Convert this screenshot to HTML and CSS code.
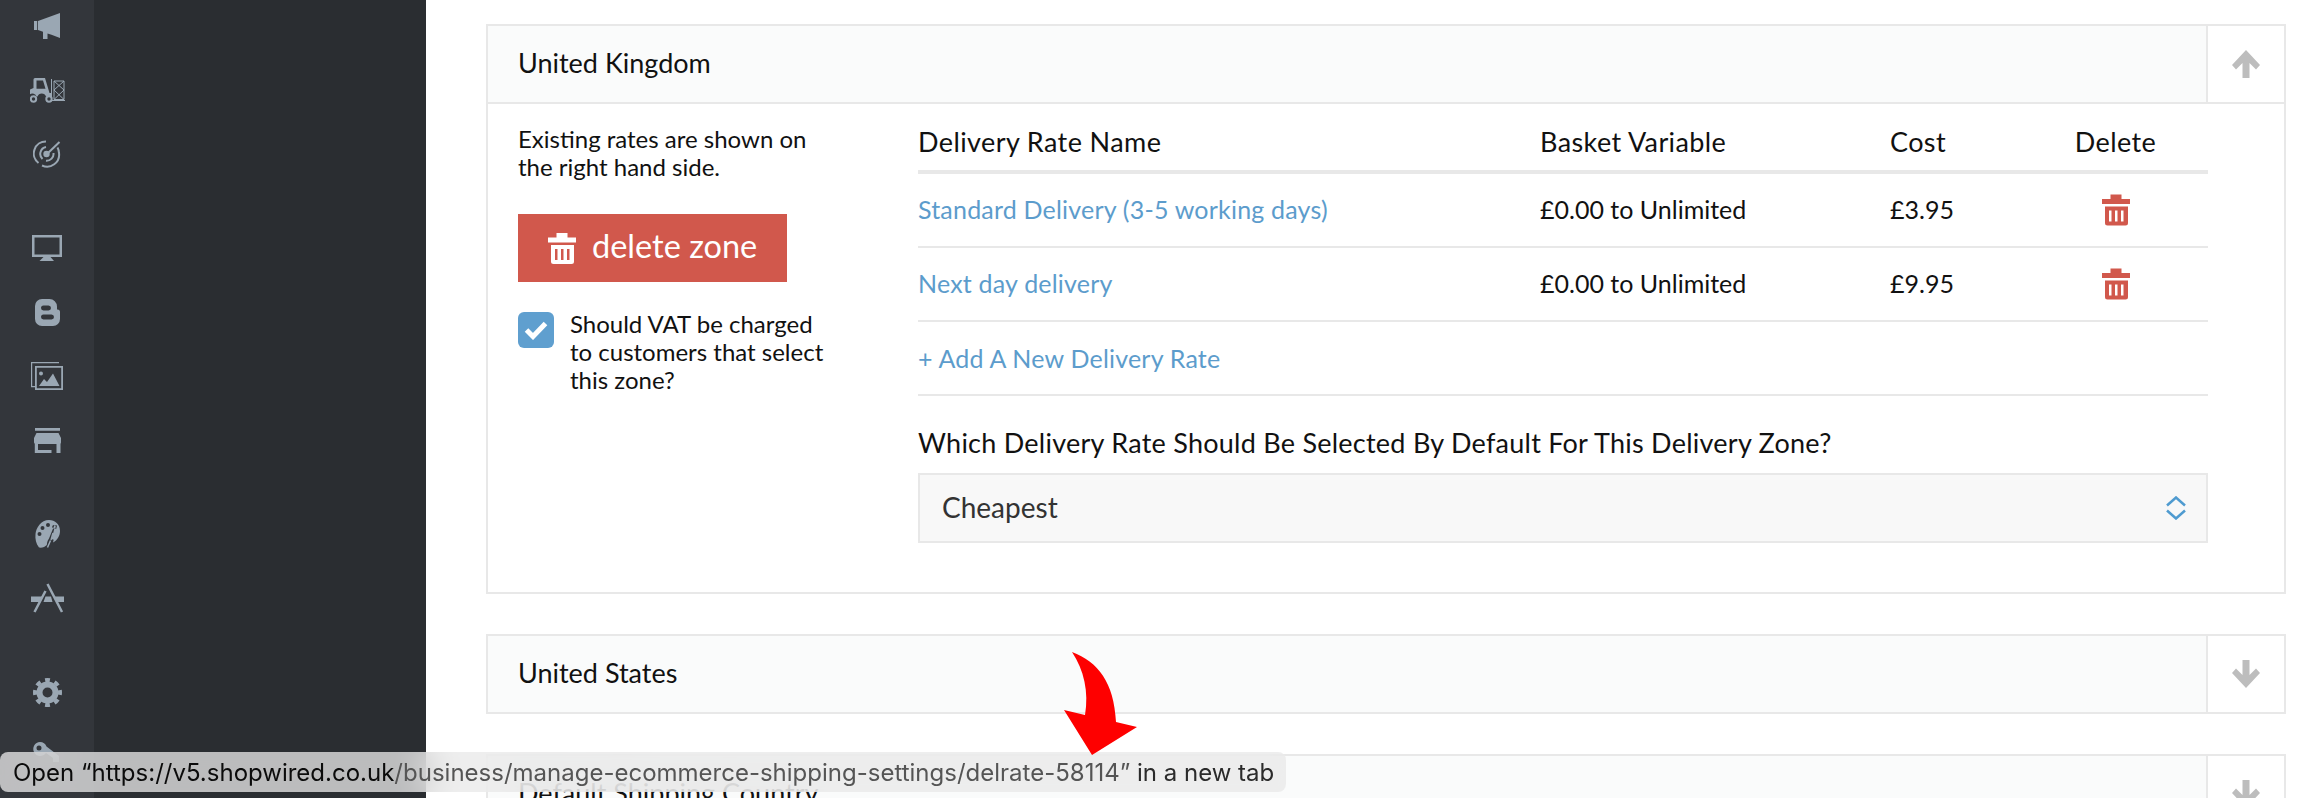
FILE: index.html
```html
<!DOCTYPE html>
<html lang="en">
<head>
<meta charset="utf-8">
<title>Delivery zones</title>
<link rel="stylesheet" href="styles.css">
</head>
<body>
<aside class="sidebar">
  <nav class="rail">
    <div class="rail-group">
      <div class="rail-item"><svg width="26" height="26" viewBox="0 0 26 26"><path class="ico" d="M0 8h3.200v9H0zM4 8L26 0v25L17.500 21.800 13.500 20.400V26H9V18.800L4 17z"/></svg></div>
      <div class="rail-item"><svg width="35" height="25" viewBox="0 0 35 25"><path class="ico" fill-rule="evenodd" d="M5 0h10l4.500 15H21v3.500h-5a4.500 4.500 0 0 0-8.500 0H6.500A4.500 4.500 0 0 0 0 16.200V11.500L3.500 10V1.500A1.500 1.500 0 0 1 5 0zM6.500 2.500V10.800H15.500L13 2.500z"/><circle class="ico-line" cx="3.500" cy="21" r="2.700"/><circle class="ico-line" cx="19" cy="21" r="2.700"/><path class="ico-thin" d="M21.500 1V22.500H35M24 3H34V21.500H24zM24 3L34 12M34 3L24 12M24 12L34 21.500M34 12L24 21.500"/></svg></div>
      <div class="rail-item"><svg width="28" height="28" viewBox="0 0 28 28"><path class="ico-line" d="M13 1.500A12 12 0 0 0 5.500 23M9 25.500A12 12 0 0 0 26 13a12 12 0 0 0-1.500-5.500M13 7A7 7 0 0 0 9.500 19M13 20.800A7 7 0 0 0 20.500 13"/><path class="ico-line" d="M14 14L26.500 2"/><circle class="ico" cx="13.500" cy="14" r="3.200"/></svg></div>
    </div>
    <div class="rail-group">
      <div class="rail-item"><svg width="30" height="26" viewBox="0 0 30 26"><path class="ico" fill-rule="evenodd" d="M0 0H30V22H18.500L22 26H7.500L11.500 22H0zM2.500 2.500V19.500H27.500V2.500z"/><rect class="ico" x="13.500" y="20" width="3" height="2"/></svg></div>
      <div class="rail-item"><svg width="25" height="27" viewBox="0 0 25 27"><path class="ico" fill-rule="evenodd" d="M7 0H14.500A7.500 7.500 0 0 1 22 7.500V10.500H22.500A2.500 2.500 0 0 1 25 13V20A7 7 0 0 1 18 27H7A7 7 0 0 1 0 20V7A7 7 0 0 1 7 0zM8.500 6.500A2.500 2.500 0 0 0 8.500 11.500H13.500A2.500 2.500 0 0 0 13.500 6.500zM8.500 15.500A2.500 2.500 0 0 0 8.500 20.500H16.500A2.500 2.500 0 0 0 16.500 15.500z"/></svg></div>
      <div class="rail-item"><svg width="32" height="28" viewBox="0 0 32 28"><path class="ico" fill-rule="evenodd" d="M0 0H28V1.200H1.200V24H4V25.200H0zM4 4H32V28H4zM5.800 5.800V26.200H30.200V5.800z"/><circle class="ico" cx="10" cy="11.500" r="2"/><path class="ico" d="M8 24L13 17 16 20 22 11.500 28.500 24z"/></svg></div>
      <div class="rail-item"><svg width="27" height="25" viewBox="0 0 27 25"><path class="ico" d="M1 0H26V2.700H1zM2.500 5H24.500L27 10V14.500L26.500 16V25H22.500V16H4V22H17.500V25H.800V16L0 14.500V10z"/></svg></div>
    </div>
    <div class="rail-group">
      <div class="rail-item"><svg width="25" height="28" viewBox="0 0 25 28"><path class="ico" fill-rule="evenodd" d="M14 0C20 0 25 4 25 11C25 15 23 20 18 22.500L22 5.500 19.500 5 14 18.500C12 21 12 24 11.800 25C10 27 7 28 4 27.500C1 24 0 19 0.500 14C1 8 6 0 14 0zM13 3A2 2 0 1 0 13 7A2 2 0 1 0 13 3zM19 5A1.800 1.800 0 1 0 19 8.600A1.800 1.800 0 1 0 19 5zM7.500 6A2 2 0 1 0 7.500 10A2 2 0 1 0 7.500 6zM4.500 12A2 2 0 1 0 4.500 16A2 2 0 1 0 4.500 12z"/><path class="ico-brush" d="M12.500 27.500L15.500 20.500M18 13L16 20"/><path class="ico" d="M19.500 8L22 9.500 19.500 20 16.500 19z"/></svg></div>
      <div class="rail-item"><svg width="33" height="31" viewBox="0 0 33 31"><path class="ico" d="M0 13.500H11L8 19H0zM22.500 13.500H33V19H25.500zM12.500 19L14.500 13.500H20L21.500 19z"/><path class="ico-wide" d="M14.500 8L3.500 29M16.500 1L31 29"/></svg></div>
    </div>
    <div class="rail-group">
      <div class="rail-item"><svg width="29" height="29" viewBox="0 0 29 29"><circle class="gear-ring" cx="14.500" cy="14.500" r="8"/><circle class="gear-teeth" cx="14.500" cy="14.500" r="12.500" pathLength="64" stroke-dasharray="4 4" stroke-dashoffset="2"/></svg></div>
      <div class="rail-item"><svg width="28" height="28" viewBox="0 0 28 28"><path class="ico" fill-rule="evenodd" d="M7 0A7 7 0 0 1 13.500 4.500L26 14V20H20V16L13 11A7 7 0 1 1 7 0zM6 3.500A2.500 2.500 0 1 0 6 8.500A2.500 2.500 0 1 0 6 3.500z"/></svg></div>
    </div>
  </nav>
  <div class="subnav"></div>
</aside>

<main class="content">
  <section class="panel">
    <header class="panel-head">
      <h2 class="panel-title">United Kingdom</h2>
      <button class="panel-toggle" type="button" aria-label="Collapse"><svg class="arrow-svg arrow-up" width="28" height="28" viewBox="0 0 28 28"><path d="M10.500 0h7v15l6.500-6.500 4 4.500L14 28 0 13l4-4.500 6.500 6.500z"/></svg></button>
    </header>
    <div class="panel-body">
      <div class="zone-side">
        <p class="zone-note">Existing rates are shown on the right hand side.</p>
        <button class="btn-delete" type="button">
          <svg class="trash trash-white" width="28" height="31" viewBox="0 0 28 31"><path fill-rule="evenodd" d="M8.500 0h11v4.500H28v5H0v-5h8.500zM3 12H26V28.500A2.500 2.500 0 0 1 23.500 31H5.500A2.500 2.500 0 0 1 3 28.500zM7 16V27H9.500V16zM13 16V27H15.500V16zM19 16V27H21.500V16z"/></svg>
          <span class="btn-label">delete zone</span>
        </button>
        <label class="vat-check">
          <span class="check-box"><svg width="24" height="20" viewBox="0 0 24 20"><path d="M2.500 10L9 16.500 21.500 3.500" /></svg></span>
          <span class="check-text">Should VAT be charged to customers that select this zone?</span>
        </label>
      </div>
      <div class="zone-main">
        <div class="rate-row rate-head">
          <span>Delivery Rate Name</span><span>Basket Variable</span><span>Cost</span><span class="cell-center">Delete</span>
        </div>
        <div class="rate-row">
          <a class="link cell-text">Standard Delivery (3-5 working days)</a><span class="cell-text">£0.00 to Unlimited</span><span class="cell-text">£3.95</span>
          <span class="cell-center"><svg class="trash trash-red" width="28" height="32" viewBox="0 0 28 31"><path fill-rule="evenodd" d="M8.500 0h11v4.500H28v5H0v-5h8.500zM3 12H26V28.500A2.500 2.500 0 0 1 23.500 31H5.500A2.500 2.500 0 0 1 3 28.500zM7 16V27H9.500V16zM13 16V27H15.500V16zM19 16V27H21.500V16z"/></svg></span>
        </div>
        <div class="rate-row">
          <a class="link cell-text">Next day delivery</a><span class="cell-text">£0.00 to Unlimited</span><span class="cell-text">£9.95</span>
          <span class="cell-center"><svg class="trash trash-red" width="28" height="32" viewBox="0 0 28 31"><path fill-rule="evenodd" d="M8.500 0h11v4.500H28v5H0v-5h8.500zM3 12H26V28.500A2.500 2.500 0 0 1 23.500 31H5.500A2.500 2.500 0 0 1 3 28.500zM7 16V27H9.500V16zM13 16V27H15.500V16zM19 16V27H21.500V16z"/></svg></span>
        </div>
        <div class="rate-row rate-add"><a class="link">+ Add A New Delivery Rate</a></div>
        <div class="select-label">Which Delivery Rate Should Be Selected By Default For This Delivery Zone?</div>
        <div class="select-box">
          <span class="select-value">Cheapest</span>
          <svg class="select-icon" width="20" height="24" viewBox="0 0 20 24"><path d="M1 9.500L10 1.500 19 9.500M1 14.500L10 22.500 19 14.500"/></svg>
        </div>
      </div>
    </div>
  </section>

  <section class="panel">
    <header class="panel-head">
      <h2 class="panel-title">United States</h2>
      <button class="panel-toggle" type="button" aria-label="Expand"><svg class="arrow-svg" width="28" height="28" viewBox="0 0 28 28"><path d="M10.500 0h7v15l6.500-6.500 4 4.500L14 28 0 13l4-4.500 6.500 6.500z"/></svg></button>
    </header>
  </section>

  <section class="panel">
    <header class="panel-head">
      <h2 class="panel-title">Default Shipping Country</h2>
      <button class="panel-toggle" type="button" aria-label="Expand"><svg class="arrow-svg" width="28" height="28" viewBox="0 0 28 28"><path d="M10.500 0h7v15l6.500-6.500 4 4.500L14 28 0 13l4-4.500 6.500 6.500z"/></svg></button>
    </header>
  </section>
</main>

<div class="link-tip"><span class="tip-origin">Open “https://v5.shopwired.co.uk</span><span class="tip-path">/business/manage-ecommerce-shipping-settings/delrate-58114”</span><span class="tip-tail"> in a new tab</span></div>

<svg class="callout-arrow" width="80" height="110" viewBox="0 0 80 110"><path d="M8 2C34 12 50 32 52 72L73 77 28 105 0 60 21 65C25 42 20 20 8 2z"/></svg>
</body>
</html>
```
FILE: styles.css
```css
* { box-sizing: border-box; }

html, body {
  margin: 0;
  height: 100%;
  overflow: hidden;
}

body {
  position: relative;
  display: flex;
  background: #fff;
  color: #111;
  font-family: "Lato", "Liberation Sans", sans-serif;
  font-size: 24px;
}

.sidebar {
  flex: 0 0 426px;
  height: 100vh;
  display: flex;
  background: #2a2d31;
}

.rail {
  flex: 0 0 94px;
  background: #33363b;
  overflow: hidden;
}

.rail-group { margin-bottom: 30px; }
.rail-group:first-child { margin-top: -6px; }

.rail-item {
  height: 64px;
  display: flex;
  align-items: center;
  justify-content: center;
}

.subnav { flex: 1; }

.ico { fill: #9aa7b3; }
.ico-line { fill: none; stroke: #9aa7b3; stroke-width: 2; }
.ico-wide { fill: none; stroke: #9aa7b3; stroke-width: 2.500; }
.ico-thin { fill: none; stroke: #9aa7b3; stroke-width: 1; }
.ico-brush { fill: none; stroke: #9aa7b3; stroke-width: 1.500; }
.gear-ring { fill: none; stroke: #9aa7b3; stroke-width: 6; }
.gear-teeth { fill: none; stroke: #9aa7b3; stroke-width: 4; }

.content {
  flex: 1;
  min-width: 0;
  padding: 24px 32px 0 60px;
}

.panel {
  border: 2px solid #e8e8e8;
  margin-bottom: 40px;
}

.panel-head {
  display: flex;
  height: 76px;
}

.panel-title {
  flex: 1;
  margin: 0;
  padding: 0 0 0 30px;
  background: #fafbfb;
  font-size: 27px;
  font-weight: 400;
  line-height: 74px;
  color: #111;
}

.panel-toggle {
  flex: 0 0 78px;
  padding: 0;
  background: #fff;
  border: 0;
  border-left: 2px solid #e8e8e8;
  display: flex;
  align-items: center;
  justify-content: center;
}

.arrow-svg { fill: #bdbdbd; }
.arrow-up { transform: rotate(180deg); }

.panel-body {
  display: flex;
  height: 490px;
  padding: 0 76px 0 30px;
  border-top: 2px solid #e8e8e8;
}

.zone-side {
  flex: 0 0 400px;
  padding-top: 21px;
}

.zone-note {
  width: 300px;
  margin: 0 0 33px;
  font-size: 24px;
  line-height: 28px;
}

.btn-delete {
  width: 269px;
  height: 68px;
  padding: 0 0 0 30px;
  display: flex;
  align-items: center;
  gap: 16px;
  border: 0;
  background: #d1584c;
  color: #fff;
  font-family: inherit;
  font-size: 32.500px;
}

.btn-label { margin-top: -5px; }

.trash-white { fill: #fff; }
.trash-red { fill: #d1584c; }

.vat-check {
  display: flex;
  gap: 16px;
  margin-top: 30px;
}

.check-box {
  flex: 0 0 36px;
  height: 36px;
  border-radius: 6px;
  background: #5f9fcf;
  display: flex;
  align-items: center;
  justify-content: center;
}

.check-box svg {
  fill: none;
  stroke: #fff;
  stroke-width: 5;
}

.check-text {
  width: 262px;
  margin-top: -2px;
  font-size: 24px;
  line-height: 28px;
}

.zone-main { flex: 1; min-width: 0; }

.rate-row {
  display: grid;
  grid-template-columns: 622px 350px 133px 1fr;
  align-items: center;
  height: 74px;
  border-bottom: 2px solid #e8e8e8;
  font-size: 25px;
}

.cell-text { margin-top: -3px; }

.rate-head {
  height: 70px;
  padding-top: 8px;
  border-bottom-width: 4px;
  font-size: 27px;
  letter-spacing: .4px;
}

.cell-center {
  display: flex;
  justify-content: center;
}

.link {
  color: #5c9ccc;
  letter-spacing: .2px;
}

.select-label {
  margin-top: 31px;
  font-size: 27px;
  letter-spacing: .25px;
  line-height: 32px;
}

.select-box {
  height: 70px;
  margin-top: 14px;
  padding: 0 20px 0 22px;
  display: flex;
  align-items: center;
  justify-content: space-between;
  border: 2px solid #e8e8e8;
  background: #f8f8f8;
  color: #333;
  font-size: 28px;
}

.select-value { margin-top: -2px; }

.select-icon {
  fill: none;
  stroke: #4f9bd0;
  stroke-width: 2.500;
}

.link-tip {
  position: absolute;
  left: 0;
  top: 752px;
  width: 1286px;
  height: 40px;
  padding-left: 13px;
  border-radius: 8px;
  background: rgba(233, 233, 233, .765);
  -webkit-backdrop-filter: blur(18px);
  backdrop-filter: blur(18px);
  font-family: "Inter", "Liberation Sans", sans-serif;
  font-size: 24px;
  line-height: 42px;
  white-space: pre;
}

.tip-origin { color: #0b0b0b; }
.tip-path { color: #555; }
.tip-tail { color: #2b2b2b; }

.callout-arrow {
  position: absolute;
  left: 1064px;
  top: 650px;
  fill: #fe0000;
}
```
